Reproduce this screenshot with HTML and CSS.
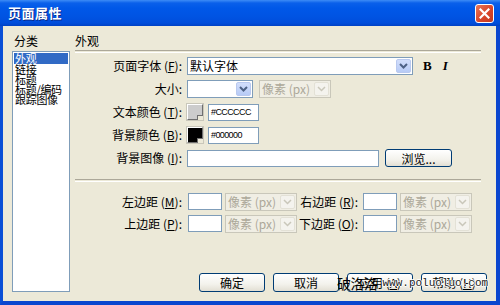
FILE: index.html
```html
<!DOCTYPE html>
<html>
<head>
    <meta charset="utf-8">
    <title>页面属性</title>
    <link rel="stylesheet" href="styles.css">
</head>
<body>
    <div class="window">
        <!-- title bar -->
        <div class="titlebar">
            <span class="title">页面属性</span>
            <span class="close">
                <svg width="11" height="11" viewBox="0 0 11 11"><path d="M1.5 1.5 L9.5 9.5 M9.5 1.5 L1.5 9.5" stroke="#fff" stroke-width="2.2" stroke-linecap="square"/></svg>
            </span>
        </div>

        <div class="dialog">
            <!-- category list -->
            <div class="side">
                <div class="head">分类</div>
                <ul class="list">
                    <li class="sel">外观</li>
                    <li>链接</li>
                    <li>标题</li>
                    <li>标题/编码</li>
                    <li>跟踪图像</li>
                </ul>
            </div>

            <div class="main">
                <div class="head">外观</div>
                <div class="rule"></div>

                <div class="rows">
                    <div class="row">
                        <span class="lbl">页面字体 (<u>F</u>):</span>
                        <div class="select fontsel"><span class="val">默认字体</span><span class="arr"><svg width="9" height="6" viewBox="0 0 9 6"><path d="M1 1 L4.5 4.5 L8 1" fill="none" stroke="#4d6185" stroke-width="2"/></svg></span></div>
                        <span class="style-b">B</span>
                        <span class="style-i">I</span>
                    </div>
                    <div class="row">
                        <span class="lbl">大小:</span>
                        <div class="select sizesel"><span class="val"></span><span class="arr"><svg width="9" height="6" viewBox="0 0 9 6"><path d="M1 1 L4.5 4.5 L8 1" fill="none" stroke="#4d6185" stroke-width="2"/></svg></span></div>
                        <div class="select unit off"><span class="val">像素 (px)</span><span class="arr"><svg width="9" height="6" viewBox="0 0 9 6"><path d="M1 1 L4.5 4.5 L8 1" fill="none" stroke="#c9c7ba" stroke-width="1.5"/></svg></span></div>
                    </div>
                    <div class="row">
                        <span class="lbl">文本颜色 (<u>T</u>):</span>
                        <span class="swatch grey"></span>
                        <span class="input hex">#CCCCCC</span>
                    </div>
                    <div class="row">
                        <span class="lbl">背景颜色 (<u>B</u>):</span>
                        <span class="swatch black"></span>
                        <span class="input hex">#000000</span>
                    </div>
                    <div class="row">
                        <span class="lbl">背景图像 (<u>I</u>):</span>
                        <span class="input path"></span>
                        <span class="btn browse">浏览...</span>
                    </div>
                </div>

                <div class="rule"></div>

                <div class="margins">
                    <div class="mrow">
                        <span class="lbl">左边距 (<u>M</u>):</span>
                        <span class="input small"></span>
                        <div class="select unit off"><span class="val">像素 (px)</span><span class="arr"><svg width="9" height="6" viewBox="0 0 9 6"><path d="M1 1 L4.5 4.5 L8 1" fill="none" stroke="#c9c7ba" stroke-width="1.5"/></svg></span></div>
                        <span class="lbl2">右边距 (<u>R</u>):</span>
                        <span class="input small"></span>
                        <div class="select unit off"><span class="val">像素 (px)</span><span class="arr"><svg width="9" height="6" viewBox="0 0 9 6"><path d="M1 1 L4.5 4.5 L8 1" fill="none" stroke="#c9c7ba" stroke-width="1.5"/></svg></span></div>
                    </div>
                    <div class="mrow">
                        <span class="lbl">上边距 (<u>P</u>):</span>
                        <span class="input small"></span>
                        <div class="select unit off"><span class="val">像素 (px)</span><span class="arr"><svg width="9" height="6" viewBox="0 0 9 6"><path d="M1 1 L4.5 4.5 L8 1" fill="none" stroke="#c9c7ba" stroke-width="1.5"/></svg></span></div>
                        <span class="lbl2">下边距 (<u>O</u>):</span>
                        <span class="input small"></span>
                        <div class="select unit off"><span class="val">像素 (px)</span><span class="arr"><svg width="9" height="6" viewBox="0 0 9 6"><path d="M1 1 L4.5 4.5 L8 1" fill="none" stroke="#c9c7ba" stroke-width="1.5"/></svg></span></div>
                    </div>
                </div>

                <div class="buttons">
                    <span class="btn">确定</span>
                    <span class="btn">取消</span>
                    <span class="btn">应用 (<u>A</u>)</span>
                    <span class="btn">帮助 (<u>H</u>)</span>
                </div>
            </div>
        </div>

        <!-- site watermark over the buttons -->
        <div class="watermark"><span class="wm-cn">破洛洛</span><span class="wm-url">www.poluoluo.com</span></div>
    </div>
</body>
</html>
```

FILE: styles.css
```css
html, body {
    margin: 0;
    padding: 0;
}
body {
    width: 500px;
    height: 305px;
    overflow: hidden;
    font-family: "Noto Sans CJK SC", "Liberation Sans", sans-serif;
    font-size: 12px;
    color: #000;
}
u { text-decoration: underline; }

.window {
    position: relative;
    width: 500px;
    height: 305px;
    box-sizing: border-box;
    display: flex;
    flex-direction: column;
    background: #0451e0;
    border-left: 3px solid #0a4fd6;
    border-right: 4px solid #0a46cf;
    border-bottom: 4px solid #0a46cf;
}

/* title bar */
.titlebar {
    height: 26px;
    flex: none;
    display: flex;
    align-items: center;
    justify-content: space-between;
    margin: 0 -4px 0 -3px;
    padding: 0 6px 0 8px;
    background: linear-gradient(#3d8cf6 0, #0a60ea 3px, #0058e8 8px, #0054e3 16px, #004ddb 23px, #0041c4 26px);
}
.title {
    color: #fff;
    font-weight: bold;
    font-size: 13px;
    line-height: 16px;
    text-shadow: 1px 1px 0 #0a2a8a;
    letter-spacing: 0.5px;
}
.close {
    width: 19px;
    height: 19px;
    box-sizing: border-box;
    border: 1px solid #fff;
    border-radius: 3px;
    background: linear-gradient(135deg, #e8785a, #d9452a 55%, #c33a1f);
    display: flex;
    align-items: center;
    justify-content: center;
}

/* dialog body */
.dialog {
    flex: 1;
    display: flex;
    background: #ece9d8;
    padding: 7px 8px 9px 9px;
}

.head {
    height: 17px;
    line-height: 15px;
    flex: none;
}

.side {
    width: 58px;
    display: flex;
    flex-direction: column;
}
.side .head { padding-left: 2px; height: 18px; }
.list {
    flex: 1;
    list-style: none;
    margin: 0;
    padding: 1px;
    background: #fff;
    border: 1px solid #7f9db9;
}
.list li {
    height: 10px;
    line-height: 10px;
    font-size: 11px;
    padding-left: 1px;
    white-space: nowrap;
    letter-spacing: -0.3px;
}
.list li.sel {
    background: #316ac5;
    color: #fff;
    height: 11px;
}

.main {
    flex: 1;
    margin-left: 5px;
    display: flex;
    flex-direction: column;
}
.rule {
    height: 1px;
    margin-right: 7px;
    border-top: 1px solid #aca899;
    border-bottom: 1px solid #fff;
    flex: none;
}

.rows {
    display: flex;
    flex-direction: column;
    gap: 5px;
    margin: 4px 0 12px 0;
}
.row {
    height: 18px;
    display: flex;
    align-items: center;
}
.lbl {
    width: 107px;
    text-align: right;
    white-space: nowrap;
    line-height: 16px;
    flex: none;
    margin-right: 5px;
}

/* combo boxes */
.select {
    height: 18px;
    box-sizing: border-box;
    display: flex;
    border: 1px solid #7f9db9;
    background: #fff;
    flex: none;
}
.select .val {
    flex: 1;
    padding-left: 2px;
    line-height: 16px;
    white-space: nowrap;
    overflow: hidden;
}
.select .arr {
    width: 15px;
    margin: 1px;
    border-radius: 2px;
    background: linear-gradient(#d2defb, #b7cbf6);
    border: 1px solid #b9c9ef;
    box-sizing: border-box;
    display: flex;
    align-items: center;
    justify-content: center;
}
.fontsel { width: 226px; }
.sizesel { width: 66px; margin-right: 6px; }
.unit { width: 72px; }
.select.off {
    background: #f0eee4;
    border-color: #c9c7ba;
    color: #aca899;
}
.select.off .arr {
    background: #f4f3ee;
    border-color: #e3e1d6;
}

.style-b {
    margin-left: 10px;
    font-family: "Liberation Serif", serif;
    font-weight: bold;
    font-size: 13px;
}
.style-i {
    margin-left: 11px;
    font-family: "Liberation Serif", serif;
    font-weight: bold;
    font-style: italic;
    font-size: 13px;
}

/* colour swatches */
.swatch {
    position: relative;
    width: 16px;
    height: 16px;
    box-sizing: border-box;
    border: 1px solid;
    border-color: #fff #6f6f6f #6f6f6f #fff;
    outline: 1px solid #c9c7ba;
    margin-right: 5px;
    flex: none;
}
.swatch.grey { background: #cccccc; }
.swatch.black { background: #000; }
.swatch::after {
    content: "";
    position: absolute;
    right: -1px;
    bottom: -1px;
    width: 5px;
    height: 4px;
    background: #ece9d8;
    border-left: 1px solid #6f6f6f;
    border-top: 1px solid #6f6f6f;
}

.input {
    height: 17px;
    box-sizing: border-box;
    border: 1px solid #7f9db9;
    background: #fff;
    flex: none;
}
.hex {
    width: 51px;
    font-family: "Liberation Sans", sans-serif;
    font-size: 9px;
    letter-spacing: -0.6px;
    line-height: 15px;
    padding-left: 2px;
}
.path { width: 192px; height: 17px; }

/* xp buttons */
.btn {
    height: 19px;
    box-sizing: border-box;
    border: 1px solid #003c74;
    border-radius: 3px;
    background: linear-gradient(#fff, #f3f2ec 60%, #e2dfd3);
    display: flex;
    align-items: center;
    justify-content: center;
    white-space: nowrap;
    flex: none;
    width: 66px;
}
.browse {
    width: 67px;
    height: 18px;
    margin-left: 6px;
}

.margins {
    display: flex;
    flex-direction: column;
    gap: 5px;
    margin-top: 11px;
}
.mrow {
    height: 17px;
    display: flex;
    align-items: center;
}
.mrow .lbl { margin-right: 6px; }
.small { width: 34px; margin-right: 3px; }
.lbl2 {
    width: 61px;
    text-align: right;
    white-space: nowrap;
    margin-right: 5px;
    line-height: 16px;
}

.buttons {
    margin-top: auto;
    display: flex;
    gap: 8px;
    margin-left: 124px;
}

.watermark {
    position: absolute;
    left: 334px;
    top: 274px;
    display: flex;
    align-items: center;
    height: 17px;
}
.wm-cn {
    font-size: 14px;
    line-height: 16px;
    letter-spacing: -0.5px;
}
.wm-url {
    margin-left: 5px;
    font-family: "Liberation Mono", monospace;
    font-size: 11px;
    color: #222;
    text-shadow: 1px 0 #fff, -1px 0 #fff, 0 1px #fff, 0 -1px #fff;
}
```
